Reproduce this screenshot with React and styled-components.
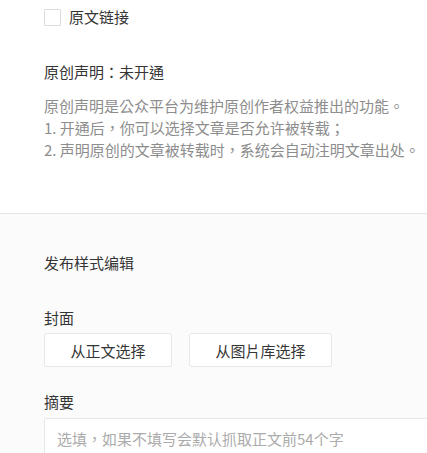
import React from 'react'
import styled, { createGlobalStyle } from 'styled-components'

const GlobalStyle = createGlobalStyle`
    html, body {
        margin: 0;
        padding: 0;
        background: #ffffff;
        overflow-x: hidden;
    }
    body {
        font-family: "Noto Sans CJK TC", "Noto Sans CJK SC", "Noto Sans", sans-serif;
        font-size: 15px;
        color: #353535;
    }
`

function App() {
    return (
        <Page>
            <GlobalStyle />
            <TopSection>
                <CheckRow>
                    <CheckBox />
                    <span>原文链接</span>
                </CheckRow>

                <Title>原创声明：未开通</Title>
                <Desc>
                    <div>原创声明是公众平台为维护原创作者权益推出的功能。</div>
                    <div>1. 开通后，你可以选择文章是否允许被转载；</div>
                    <div>2. 声明原创的文章被转载时，系统会自动注明文章出处。</div>
                </Desc>
            </TopSection>

            <BottomSection>
                <SectionTitle>发布样式编辑</SectionTitle>

                <Label gap={33}>封面</Label>
                <ButtonRow>
                    <Button width={128}>从正文选择</Button>
                    <Button width={143}>从图片库选择</Button>
                </ButtonRow>

                <Label gap={24}>摘要</Label>
                <SummaryInput placeholder="选填，如果不填写会默认抓取正文前54个字" />
            </BottomSection>
        </Page>
    )
}

export default App

const Page = styled.div`
    width: 427px;
    min-height: 453px;
    overflow: hidden;
    display: flex;
    flex-direction: column;
`

const TopSection = styled.div`
    padding: 6px 0 52px 44px;
    border-bottom: 1px solid #e4e4e4;
`

const CheckRow = styled.label`
    display: flex;
    align-items: center;
    gap: 8px;
    height: 22px;
    line-height: 22px;
    color: #353535;
`

const CheckBox = styled.span`
    width: 15px;
    height: 15px;
    border: 1px solid #dcdcdc;
    background: #fff;
    border-radius: 1px;
`

const Title = styled.div`
    margin-top: 33px;
    line-height: 22px;
    color: #353535;
`

const Desc = styled.div`
    margin-top: 12px;
    line-height: 22px;
    color: #8d8d8d;
    white-space: nowrap;
`

const BottomSection = styled.div`
    flex-grow: 1;
    background: #fbfbfb;
    padding: 38px 0 0 44px;
`

const SectionTitle = styled.div`
    line-height: 22px;
    color: #353535;
`

const Label = styled.div`
    margin-top: ${p => p.gap}px;
    line-height: 22px;
    color: #353535;
`

const ButtonRow = styled.div`
    display: flex;
    gap: 17px;
    margin-top: 4px;
`

const Button = styled.div`
    width: ${p => p.width}px;
    height: 34px;
    box-sizing: border-box;
    border: 1px solid #e7e7eb;
    border-radius: 3px;
    background: #ffffff;
    display: flex;
    align-items: center;
    justify-content: center;
    color: #353535;
`

const SummaryInput = styled.input`
    display: block;
    margin-top: 5px;
    width: 430px;
    height: 40px;
    box-sizing: border-box;
    padding: 0 12px;
    border: 1px solid #e7e7eb;
    border-radius: 2px;
    background: #ffffff;
    font-family: "Noto Sans CJK TC", "Noto Sans CJK SC", "Noto Sans", sans-serif;
    font-size: 15px;
    color: #353535;
    outline: none;
    &::placeholder {
        color: #ababab;
    }
`
